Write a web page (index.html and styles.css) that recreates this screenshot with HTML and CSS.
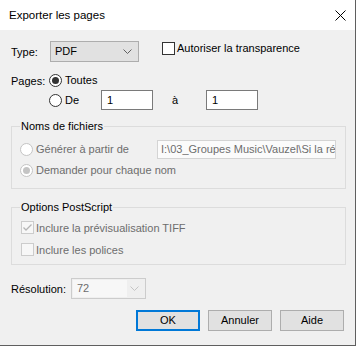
FILE: index.html
```html
<!DOCTYPE html>
<html lang="fr">
<head>
<meta charset="utf-8">
<title>Exporter les pages</title>
<link rel="stylesheet" href="styles.css">
</head>
<body>
<div class="dialog">
  <div class="titlebar">
    <span class="title">Exporter les pages</span>
    <svg class="close" width="11" height="11" viewBox="0 0 11 11"><path d="M0.5 0.5 L10.5 10.5 M10.5 0.5 L0.5 10.5" stroke="#000" stroke-width="1" fill="none"/></svg>
  </div>
  <div class="content">
    <div class="row-type">
      <span class="lbl-type">Type:</span>
      <div class="select">
        <span class="sel-text">PDF</span>
        <svg class="chev" width="9" height="5" viewBox="0 0 9 5"><path d="M0.5 0.5 L4.5 4.5 L8.5 0.5" stroke="#606060" stroke-width="1" fill="none"/></svg>
      </div>
      <div class="check-item transp">
        <span class="box"></span>
        <span class="ctext">Autoriser la transparence</span>
      </div>
    </div>

    <div class="row-pages">
      <span class="lbl-pages">Pages:</span>
      <span class="radio on"></span>
      <span class="rtext">Toutes</span>
    </div>

    <div class="row-de">
      <div class="de-opt">
        <span class="radio"></span>
        <span class="rtext">De</span>
      </div>
      <div class="edit">1</div>
      <span class="a-lbl">à</span>
      <div class="edit">1</div>
    </div>

    <fieldset class="group g1">
      <legend>Noms de fichiers</legend>
      <div class="grow grow1">
        <div class="gopt">
          <span class="radio dis"></span>
          <span class="rtext dtext">Générer à partir de</span>
        </div>
        <div class="edit-dis">I:\03_Groupes Music\Vauzel\Si la ré</div>
      </div>
      <div class="grow grow2">
        <span class="radio dis on"></span>
        <span class="rtext dtext">Demander pour chaque nom</span>
      </div>
    </fieldset>

    <fieldset class="group g2">
      <legend>Options PostScript</legend>
      <div class="check-item gc1">
        <span class="box dis">
          <svg width="11" height="11" viewBox="0 0 11 11"><path d="M1.5 5.5 L4 8 L9.5 2.5" stroke="#b5b5b5" stroke-width="1.3" fill="none"/></svg>
        </span>
        <span class="ctext dtext">Inclure la prévisualisation TIFF</span>
      </div>
      <div class="check-item gc2">
        <span class="box dis"></span>
        <span class="ctext dtext">Inclure les polices</span>
      </div>
    </fieldset>

    <div class="row-res">
      <span class="lbl-res">Résolution:</span>
      <div class="select-dis">
        <span class="sel-field">72</span>
        <svg class="chev" width="9" height="5" viewBox="0 0 9 5"><path d="M0.5 0.5 L4.5 4.5 L8.5 0.5" stroke="#c4c4c4" stroke-width="1" fill="none"/></svg>
      </div>
    </div>

    <div class="buttons">
      <div class="btn default">OK</div>
      <div class="btn">Annuler</div>
      <div class="btn">Aide</div>
    </div>
  </div>
</div>
</body>
</html>
```

FILE: styles.css
```css
html, body {
  margin: 0;
  padding: 0;
  background: #ffffff;
}
body {
  font-family: "Liberation Sans", Arial, sans-serif;
  font-size: 11px;
  color: #000;
}
.dialog {
  width: 356px;
  height: 346px;
  box-sizing: border-box;
  border-right: 1px solid #5f5f5f;
  border-bottom: 1px solid #5f5f5f;
  background: #f0f0f0;
  display: flex;
  flex-direction: column;
}
.titlebar {
  height: 30px;
  flex: none;
  background: #ffffff;
  display: flex;
  align-items: center;
  padding-left: 9px;
}
.title {
  font-size: 11.5px;
  line-height: 14px;
}
.close {
  margin-left: auto;
  margin-right: 9px;
  display: block;
}
.content {
  padding: 0 9px 0 11px;
  display: flex;
  flex-direction: column;
}

/* Type row */
.row-type {
  display: flex;
  align-items: flex-start;
  margin-top: 11px;
}
.lbl-type {
  width: 39px;
  margin-top: 5px;
  line-height: 13px;
}
.select {
  width: 89px;
  height: 21px;
  box-sizing: border-box;
  border: 1px solid #adadad;
  background: #e1e1e1;
  display: flex;
  align-items: center;
  padding: 0 4px 0 4px;
}
.sel-text {
  line-height: 13px;
}
.chev {
  margin-left: auto;
  display: block;
}
.select .chev { margin-right: 2px; }
.check-item {
  display: flex;
  align-items: center;
}
.transp {
  margin-left: 23px;
  height: 14px;
}
.box {
  width: 13px;
  height: 13px;
  box-sizing: border-box;
  border: 1px solid #333333;
  background: #ffffff;
  flex: none;
  display: flex;
  align-items: center;
  justify-content: center;
}
.box.dis {
  border-color: #cccccc;
  background: #f7f7f7;
}
.box svg { display: block; }
.ctext {
  margin-left: 2px;
  line-height: 14px;
}

/* radios */
.radio {
  width: 13px;
  height: 13px;
  box-sizing: border-box;
  border: 1px solid #333333;
  border-radius: 50%;
  background: #ffffff;
  flex: none;
  display: flex;
  align-items: center;
  justify-content: center;
}
.radio.on::after {
  content: "";
  width: 7px;
  height: 7px;
  border-radius: 50%;
  background: #333333;
}
.radio.dis {
  border-color: #c4c4c4;
}
.radio.dis.on::after {
  background: #c4c4c4;
}
.rtext {
  margin-left: 3px;
  line-height: 13px;
}
.dtext {
  color: #6d6d6d;
}

/* Pages row */
.row-pages {
  display: flex;
  align-items: center;
  height: 13px;
  margin-top: 12px;
}
.lbl-pages {
  width: 38px;
}
.row-de {
  display: flex;
  align-items: center;
  height: 20px;
  margin-top: 3px;
  padding-left: 38px;
}
.de-opt {
  width: 52px;
  display: flex;
  align-items: center;
}
.edit {
  width: 52px;
  height: 20px;
  box-sizing: border-box;
  border: 1px solid #7a7a7a;
  background: #ffffff;
  padding-left: 5px;
  line-height: 18px;
}
.a-lbl {
  width: 34px;
  padding-left: 19px;
}

/* groups */
.group {
  margin: 10px 0 0 0;
  padding: 7px 8px 0 8px;
  border: 1px solid #dcdcdc;
  min-inline-size: 0;
}
.group legend {
  padding: 0 1px;
  line-height: 13px;
}
.g1 { padding-bottom: 11px; }
.grow {
  display: flex;
  align-items: center;
}
.grow1 { height: 19px; }
.gopt {
  width: 137px;
  display: flex;
  align-items: center;
}
.edit-dis {
  width: 179px;
  height: 19px;
  box-sizing: border-box;
  border: 1px solid #d4d4d4;
  background: #fbfbfb;
  color: #6d6d6d;
  padding-left: 3px;
  line-height: 17px;
  white-space: nowrap;
  overflow: hidden;
}
.grow2 {
  height: 14px;
  margin-top: 4px;
}
.g2 {
  margin-top: 12px;
  padding-bottom: 8px;
}
.gc1 { height: 13px; margin-left: 1px; }
.gc2 { height: 13px; margin-left: 1px; margin-top: 9px; }

/* resolution */
.row-res {
  display: flex;
  align-items: center;
  margin-top: 13px;
  height: 21px;
}
.lbl-res {
  width: 60px;
}
.select-dis {
  width: 75px;
  height: 21px;
  box-sizing: border-box;
  border: 1px solid #cccccc;
  background: #efefef;
  display: flex;
  align-items: center;
  padding: 1px 6px 1px 1px;
}
.sel-field {
  width: 54px;
  height: 100%;
  background: #f7f7f7;
  color: #6d6d6d;
  padding-left: 4px;
  box-sizing: border-box;
  line-height: 17px;
}

/* buttons */
.buttons {
  display: flex;
  justify-content: flex-end;
  gap: 8px;
  margin-top: 11px;
  padding-right: 2px;
}
.btn {
  width: 64px;
  height: 21px;
  box-sizing: border-box;
  border: 1px solid #adadad;
  background: #e1e1e1;
  display: flex;
  align-items: center;
  justify-content: center;
  line-height: 13px;
}
.btn.default {
  border: 2px solid #0078d7;
}
```
